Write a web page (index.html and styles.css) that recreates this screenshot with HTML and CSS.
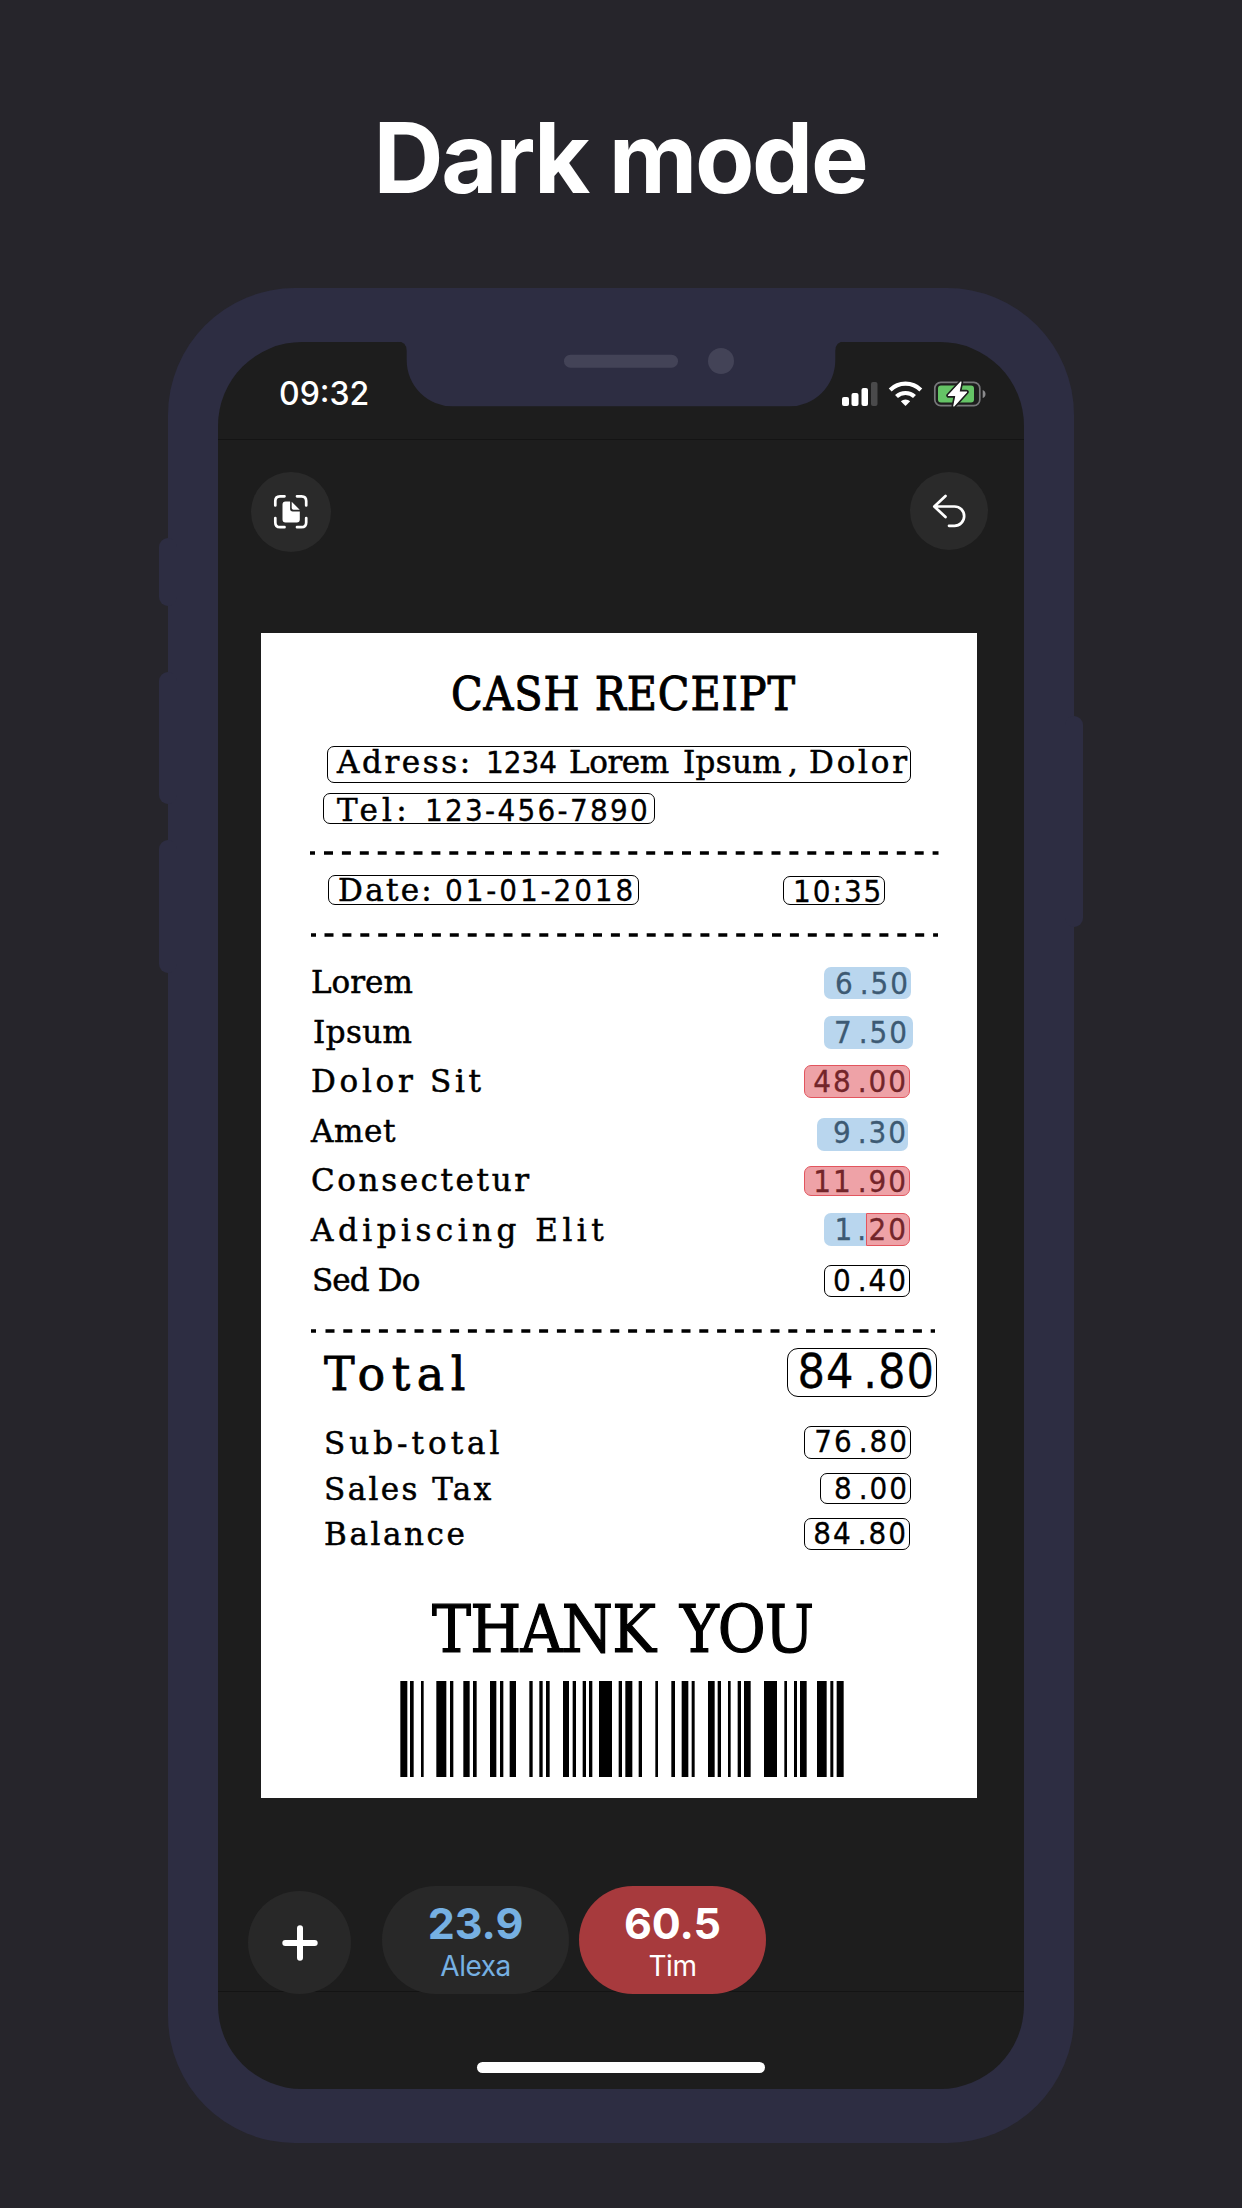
FILE: index.html
```html
<!DOCTYPE html>
<html lang="en">
<head>
<meta charset="utf-8">
<title>Dark mode</title>
<link rel="stylesheet" href="styles.css">
</head>
<body>
<h1 class="headline">Dark mode</h1>
<main class="phone">
  <i class="key key-mute"></i><i class="key key-up"></i><i class="key key-down"></i><i class="key key-power"></i>
  <svg class="notch" width="448" height="66" viewBox="0 0 448 66">
    <path fill="#2d2d42" d="M0 0V.6Q9.700.6 9.700 10V19.300A46 46 0 0 0 56 65.300H392A46 46 0 0 0 438.300 19.300V10Q438.300.6 448 .6V0Z"/>
    <rect x="167" y="13.700" width="114" height="13" rx="6.500" fill="#434357"/>
    <circle cx="324" cy="20" r="13" fill="#434357"/>
  </svg>
  <div class="screen">
    <header class="status">
      <span class="clock">09:32</span>
      <svg class="indicators" width="146" height="28" viewBox="0 0 146 28">
        <g fill="#fff">
          <rect x="1" y="17" width="7" height="9" rx="2"/>
          <rect x="10.500" y="13" width="7" height="13" rx="2"/>
          <rect x="20.500" y="8" width="6.500" height="18" rx="2"/>
          <rect x="30" y="2" width="6.500" height="24" rx="2" fill="#4a4a4b"/>
          <path d="M64.500 26l-4.700-4.700a7 7 0 0 1 9.400 0z"/>
        </g>
        <g fill="none" stroke="#fff" stroke-width="4.200">
          <path d="M55.500 16.600a13 13 0 0 1 18 0"/>
          <path d="M49.200 9.900a22 22 0 0 1 30.600 0"/>
        </g>
        <rect x="93.800" y="2.300" width="45" height="23.400" rx="6" fill="none" stroke="#77777a" stroke-width="1.700"/>
        <path d="M141.700 10q2.800 1 2.800 4t-2.800 4z" fill="#8b8b8d"/>
        <rect x="97" y="5.500" width="36" height="17" rx="3" fill="#65c466"/>
        <path d="M120 2L107.500 15.500H115L112.800 26L125.500 12H118Z" fill="#fff" stroke="#1d1d1d" stroke-width="4.500" stroke-linejoin="round" paint-order="stroke"/>
        <path d="M120 2L107.500 15.500H115L112.800 26L125.500 12H118Z" fill="#fff" stroke="#fff" stroke-width="1.200" stroke-linejoin="round"/>
      </svg>
    </header>
    <nav class="toolbar">
      <button class="round scan" aria-label="Scan document">
        <svg width="36" height="36" viewBox="0 0 36 36">
          <path d="M2.300 11.500V7q0-4.700 4.700-4.700h4.500M24 2.300h4.500q4.700 0 4.700 4.700v4.500M33.200 24v4.500q0 4.700-4.700 4.700H24M11.500 33.200H7q-4.700 0-4.700-4.700V24" fill="none" stroke="#fff" stroke-width="2.700" stroke-linecap="round"/>
          <path d="M12.500 7.500h4.600v7.300q0 2.700 2.700 2.700h7v8q0 3-3 3H12.500q-3 0-3-3v-15q0-3 3-3zM18.700 7.700l8 8h-6.200q-1.800 0-1.800-1.800z" fill="#fff"/>
        </svg>
      </button>
      <button class="round undo" aria-label="Undo">
        <svg width="36" height="36" viewBox="0 0 36 36">
          <path d="M14.500 3L3.300 13.500L14.500 24M3.800 13.500H23.500A9.600 9.600 0 0 1 23.500 32.800H18" fill="none" stroke="#fff" stroke-width="2.700" stroke-linecap="round" stroke-linejoin="round"/>
        </svg>
      </button>
    </nav>
    <article class="receipt">
      <h2 class="title">CASH RECEIPT</h2>
      <div class="box address"><span class="w-adress">Adress:</span><span class="num w-1234">1234</span><span class="w-lorem">Lorem</span><span class="w-ipsum">Ipsum</span><span class="w-comma">,</span><span class="w-dolor">Dolor</span></div>
      <div class="box tel"><span class="w-tel">Tel:</span><span class="num w-phone">123-456-7890</span></div>
      <svg class="rule" width="630" height="4" viewBox="0 0 630 4"><path d="M1 2h5M15 2H629.500" stroke="#000" stroke-width="3.600" stroke-dasharray="9 8.900"/></svg>
      <div class="when">
        <div class="box date"><span class="w-date">Date:</span><span class="num w-day">01-01-2018</span></div>
        <div class="box time num">10:35</div>
      </div>
      <svg class="rule rule-2" width="630" height="4" viewBox="0 0 630 4"><path d="M1 2h5M14.500 2H628" stroke="#000" stroke-width="3.600" stroke-dasharray="9 8.900"/></svg>
      <section class="items">
        <div class="row"><span class="lorem">Lorem</span><span class="box num alexa p1">6<i>.</i>50</span></div>
        <div class="row"><span class="ipsum">Ipsum</span><span class="box num alexa p2">7<i>.</i>50</span></div>
        <div class="row"><span class="dolor">Dolor Sit</span><span class="box num tim p3">48<i>.</i>00</span></div>
        <div class="row"><span class="amet">Amet</span><span class="box num alexa p4">9<i>.</i>30</span></div>
        <div class="row"><span class="cons">Consectetur</span><span class="box num tim p5">11<i>.</i>90</span></div>
        <div class="row"><span class="adip">Adipiscing Elit</span><span class="split"><span class="box num alexa half-a">1<i>.</i></span><span class="box num tim half-b">20</span></span></div>
        <div class="row"><span class="sed">Sed Do</span><span class="box num p7">0<i>.</i>40</span></div>
      </section>
      <svg class="rule rule-3" width="630" height="4" viewBox="0 0 630 4"><path d="M1 2h5M15.500 2H625" stroke="#000" stroke-width="3.600" stroke-dasharray="9 8.800"/></svg>
      <section class="totals">
        <div class="row grand"><span class="total">Total</span><span class="box num p8">84<i>.</i>80</span></div>
        <div class="row"><span class="sub">Sub-total</span><span class="box num p9">76<i>.</i>80</span></div>
        <div class="row"><span class="tax">Sales Tax</span><span class="box num p10">8<i>.</i>00</span></div>
        <div class="row"><span class="bal">Balance</span><span class="box num p11">84<i>.</i>80</span></div>
      </section>
      <p class="thanks">THANK YOU</p>
      <svg class="barcode" width="444" height="96" viewBox="60 0 1332 288" preserveAspectRatio="none">
        <path d="M61 0h21v288h-21zM90 0h11v288h-11zM123 0h8v288h-8zM169 0h30v288h-30zM210 0h10v288h-10zM250 0h19v288h-19zM279 0h11v288h-11zM330 0h19v288h-19zM360 0h10v288h-10zM389 0h19v288h-19zM448 0h10v288h-10zM478 0h10v288h-10zM498 0h11v288h-11zM549 0h18v288h-18zM578 0h10v288h-10zM608 0h10v288h-10zM627 0h10v288h-10zM657 0h39v288h-39zM716 0h10v288h-10zM736 0h21v288h-21zM776 0h10v288h-10zM826 0h8v288h-8zM874 0h11v288h-11zM905 0h20v288h-20zM935 0h9v288h-9zM984 0h20v288h-20zM1013 0h10v288h-10zM1044 0h8v288h-8zM1073 0h10v288h-10zM1092 0h20v288h-20zM1152 0h39v288h-39zM1213 0h8v288h-8zM1242 0h9v288h-9zM1260 0h20v288h-20zM1311 0h29v288h-29zM1351 0h9v288h-9zM1370 0h21v288h-21z"/>
      </svg>
    </article>
    <footer class="people">
      <button class="add" aria-label="Add person"><svg width="36" height="36" viewBox="0 0 36 36"><path d="M18 3.300V32.700M3.300 18H32.700" stroke="#fff" stroke-width="6" stroke-linecap="round"/></svg></button>
      <button class="person blue"><b>23.9</b><span>Alexa</span></button>
      <button class="person red"><b>60.5</b><span>Tim</span></button>
    </footer>
    <div class="home"></div>
  </div>
</main>
</body>
</html>
```
FILE: styles.css
```css
* { box-sizing: border-box; }
body {
  margin: 0;
  width: 1242px;
  height: 2208px;
  overflow: hidden;
  background: #26252b;
  color: #fff;
  font-family: Inter, "Liberation Sans", sans-serif;
}
button { border: 0; padding: 0; color: inherit; font: inherit; }
svg { display: block; }
.headline {
  margin: 0;
  height: 288px;
  padding: 98px 2px 0 0;
  text-align: center;
  font-size: 97px;
  line-height: 120px;
  font-weight: 700;
  letter-spacing: -2.300px;
}

/* device frame */
.phone {
  position: relative;
  width: 906px;
  height: 1855px;
  margin-left: 168px;
  padding: 54px 50px;
  border-radius: 127px;
  background: #2d2d42;
}
.key { position: absolute; left: -9px; width: 18px; border-radius: 9px; background: #2d2d42; }
.key-mute { top: 250px; height: 68px; }
.key-up { top: 384px; height: 132px; }
.key-down { top: 552px; height: 133px; }
.key-power { left: auto; right: -9px; top: 428px; height: 211px; }
.notch { position: absolute; left: 229px; top: 53px; }
.screen {
  width: 806px;
  height: 1747px;
  display: flex;
  flex-direction: column;
  border-radius: 84px;
  overflow: hidden;
  background: #1d1d1d;
}
.status {
  height: 98px;
  flex: none;
  display: flex;
  justify-content: space-between;
  align-items: flex-start;
  padding: 32px 37px 0 61px;
  border-bottom: 1px solid #141414;
}
.clock { font-size: 32px; line-height: 40px; font-weight: 500; }
.indicators { margin-top: 6px; }
.toolbar {
  flex: none;
  height: 193px;
  padding: 32px 36px 0 33px;
  display: flex;
  justify-content: space-between;
  align-items: flex-start;
}
.round { width: 80px; height: 80px; border-radius: 50%; background: #2a2a2a; display: grid; place-items: center; }
.undo { width: 78px; height: 78px; }

/* scanned receipt */
.receipt {
  flex: none;
  width: 716px;
  height: 1165px;
  margin-left: 43px;
  background: #fff;
  color: #000;
  font-family: "DejaVu Serif", serif;
  font-size: 31px;
  white-space: nowrap;
  -webkit-text-stroke: .500px currentColor;
}
.num { font-family: "DejaVu Sans Condensed", "DejaVu Sans", sans-serif; letter-spacing: 2px; -webkit-text-stroke-width: .300px; }
.num i { font-style: normal; margin-left: 5px; }
.title {
  margin: 0;
  height: 113px;
  padding: 30px 0 0 190px;
  font-family: "DejaVu Serif Condensed", "DejaVu Serif", serif;
  font-size: 46px;
  font-weight: 400;
  line-height: 62px;
  letter-spacing: .900px;
  -webkit-text-stroke-width: .900px;
}
.box { display: block; border: 1.500px solid #000; border-radius: 7px; }
.address { margin-left: 66px; width: 584px; height: 37px; line-height: 30px; padding-left: 9px; display: flex; }
.w-adress { width: 149px; letter-spacing: 2.600px; }
.w-1234 { width: 83px; letter-spacing: 0; }
.w-lorem { width: 114px; letter-spacing: -.400px; }
.w-ipsum { width: 105px; letter-spacing: .300px; }
.w-comma { width: 21px; }
.w-dolor { letter-spacing: 2.800px; }
.tel { margin: 10px 0 0 62px; width: 332px; height: 31px; line-height: 33px; padding-left: 13px; display: flex; }
.w-tel { width: 88px; letter-spacing: 4.200px; }
.w-phone { letter-spacing: 2.300px; }
.rule { margin: 27px 0 0 48px; }
.when { display: flex; padding: 20px 0 0 67px; height: 78px; }
.date { width: 311px; height: 30px; line-height: 29px; padding-left: 9px; display: flex; }
.w-date { width: 107px; letter-spacing: 2.300px; }
.w-day { letter-spacing: 2.900px; }
.time { width: 102px; height: 29px; margin: 1px 0 0 144px; line-height: 28px; padding-left: 9px; }
.rule-2 { margin-top: 0; margin-left: 49px; }
.items { padding: 21px 67px 0 50px; height: 392px; }
.row { display: flex; justify-content: space-between; align-items: flex-start; height: 49.600px; line-height: 49.600px; }
.row .box { text-align: right; padding-right: 1px; }
.lorem { letter-spacing: 0; }
.ipsum { letter-spacing: .400px; padding-left: 2px; }
.dolor { letter-spacing: 3.700px; }
.amet { letter-spacing: .600px; }
.cons { letter-spacing: 2.600px; }
.adip { letter-spacing: 4.500px; }
.sed { letter-spacing: -.900px; padding-left: 1px; }
.alexa { border: 0; padding-top: 1px; background: #b9d6ee; color: #3d5a73; }
.tim { border: 1.500px solid #e2555e; background: #eea2a7; color: #73252a; }
.p1 { width: 87px; height: 32px; margin: 9px -1px 0 0; line-height: 30px; }
.p2 { width: 89px; height: 33px; margin: 8.500px -3px 0 0; line-height: 30px; }
.row .p2 { padding-right: 4px; }
.p3 { width: 106px; height: 33px; margin: 8px 0 0; line-height: 31px; }
.p4 { width: 91px; height: 33px; margin: 11px 2px 0 0; line-height: 26px; }
.row .p4 { padding-right: 0; }
.p5 { width: 106px; height: 30px; margin: 10px 0 0; line-height: 28px; }
.split { display: flex; margin-top: 7.500px; line-height: 31px; }
.half-a { width: 42px; height: 33px; border-radius: 7px 0 0 7px; }
.row .half-a { padding-right: 0; letter-spacing: 0; }
.half-b { width: 44px; height: 33px; border-radius: 0 7px 7px 0; }
.p7 { width: 86px; height: 32px; margin: 9px 0 0; line-height: 28px; }
.rule-3 { margin-top: 0; margin-left: 49px; }
.totals { padding: 15px 66px 0 63px; height: 244px; }
.totals .row { height: 45.500px; line-height: 35px; }
.totals .grand { height: 78px; line-height: 52px; font-size: 46px; }
.total { letter-spacing: 6.500px; -webkit-text-stroke-width: .800px; }
.grand .p8 { width: 150px; height: 49px; margin: 0 -26px 0 0; line-height: 45px; font-size: 48px; letter-spacing: 1px; border-radius: 11px; }
.grand .p8 i { margin-left: 9px; }
.sub { letter-spacing: 4px; }
.tax { letter-spacing: 2.400px; }
.bal { letter-spacing: 2.600px; }
.totals .p9 { width: 107px; height: 33px; margin-top: 0; line-height: 29px; }
.totals .p10 { width: 91px; height: 31px; margin-top: 1px; line-height: 28px; }
.totals .p11 { width: 106px; height: 32px; margin: 1px 1px 0 0; line-height: 28px; }
.thanks {
  margin: 0;
  height: 104px;
  padding-left: 171px;
  font-family: "DejaVu Serif Condensed", "DejaVu Serif", serif;
  font-size: 65px;
  line-height: 106px;
  letter-spacing: -.800px;
  word-spacing: 7px;
  -webkit-text-stroke-width: 1.200px;
}
.barcode { margin-left: 139px; }

/* bottom bar */
.people {
  flex: none;
  height: 194px;
  padding: 88px 0 0 30px;
  display: flex;
  align-items: flex-start;
  background: linear-gradient(#141414, #141414) 0 193px / 100% 1px no-repeat;
}
.add { width: 103px; height: 103px; margin: 5px 31px 0 0; border-radius: 50%; background: #282828; display: grid; place-items: center; }
.person { width: 187px; height: 108px; margin-right: 10px; border-radius: 54px; display: flex; flex-direction: column; align-items: center; padding-top: 11px; }
.person b { font-size: 43px; line-height: 52px; font-weight: 700; }
.person span { font-size: 28px; line-height: 34px; letter-spacing: -.500px; }
.blue { background: #282828; color: #76b0e2; }
.red { background: #a73a3d; }
.home { width: 288px; height: 11px; margin: 70px 0 0 259px; border-radius: 6px; background: #fff; flex: none; }
```
